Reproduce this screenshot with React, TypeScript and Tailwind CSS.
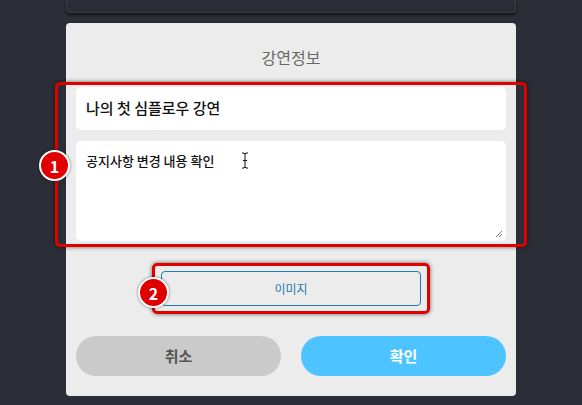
import React from "react";

const font = { fontFamily: '"Noto Sans CJK KR", "Noto Sans", sans-serif' };

function Badge({ n, className }: { n: string; className: string }) {
  return (
    <div
      className={`absolute w-[31px] h-[31px] rounded-full bg-[#e00000] border-2 border-white flex items-center justify-center text-white text-[16px] font-bold leading-none shadow-[0_0_3px_rgba(0,0,0,0.5)] ${className}`}
    >
      {n}
    </div>
  );
}

export default function App() {
  return (
    <div
      className="w-[582px] h-[405px] bg-[#2b2e36] overflow-hidden flex flex-col items-center"
      style={font}
    >
      <div className="w-[450px] h-[13px] shrink-0 bg-[#2a2d35] border border-t-0 border-[#3a3d45] rounded-b-[4px] shadow-[0_2px_3px_rgba(0,0,0,0.6)]" />
      <div className="relative mt-[10px] w-[450px] bg-[#ececec] rounded-[4px] px-[10px] pt-[22px] pb-[20px] flex flex-col">
        <div className="h-[24px] text-center text-[16px] leading-[24px] text-[#666]">
          강연정보
        </div>
        <div className="mt-[18px] h-[43px] bg-white rounded-[5px] flex items-center pl-[10px] text-[15px] font-medium text-[#111]">
          나의 첫 심플로우 강연
        </div>
        <div className="relative mt-[11px] h-[100px] bg-white rounded-[5px] pl-[10px] pt-[10px] text-[13px] leading-[20px] font-medium text-[#111]">
          공지사항 변경 내용 확인
          <svg
            className="absolute left-[165px] top-[11px]"
            width="8"
            height="17"
            viewBox="0 0 8 17"
          >
            <path d="M1 1h2l1 1l1-1h2M4 2v13M1 16h2l1-1l1 1h2M2 8.5h4" stroke="#111" strokeWidth="1" fill="none" />
          </svg>
          <svg
            className="absolute right-[3px] bottom-[3px]"
            width="8"
            height="8"
            viewBox="0 0 8 8"
          >
            <path d="M1 7L7 1M4 7L7 4" stroke="#777" strokeWidth="1" />
          </svg>
        </div>
        <div className="mt-[30px] flex justify-center">
          <div className="w-[260px] h-[35px] border border-[#1f7bb0] rounded-[4px] flex items-center justify-center text-[12px] text-[#2a78a8]">
            이미지
          </div>
        </div>
        <div className="mt-[30px] flex gap-[20px]">
          <div className="flex-1 h-[40px] rounded-full bg-[#cacaca] flex items-center justify-center text-[15px] font-bold text-[#555]">
            취소
          </div>
          <div className="flex-1 h-[40px] rounded-full bg-[#4dc4ff] flex items-center justify-center text-[15px] font-bold text-white">
            확인
          </div>
        </div>

        <div className="absolute left-[-11px] top-[59px] w-[472px] h-[165px] border-[3px] border-[#e00000] rounded-[5px] shadow-[0_0_4px_rgba(0,0,0,0.6)] pointer-events-none" />
        <div className="absolute left-[86px] top-[240px] w-[278px] h-[51px] border-[3px] border-[#e00000] rounded-[5px] shadow-[0_0_4px_rgba(0,0,0,0.6)] pointer-events-none" />
        <Badge n="1" className="left-[-27px] top-[127px]" />
        <Badge n="2" className="left-[72px] top-[254px]" />
      </div>
    </div>
  );
}
